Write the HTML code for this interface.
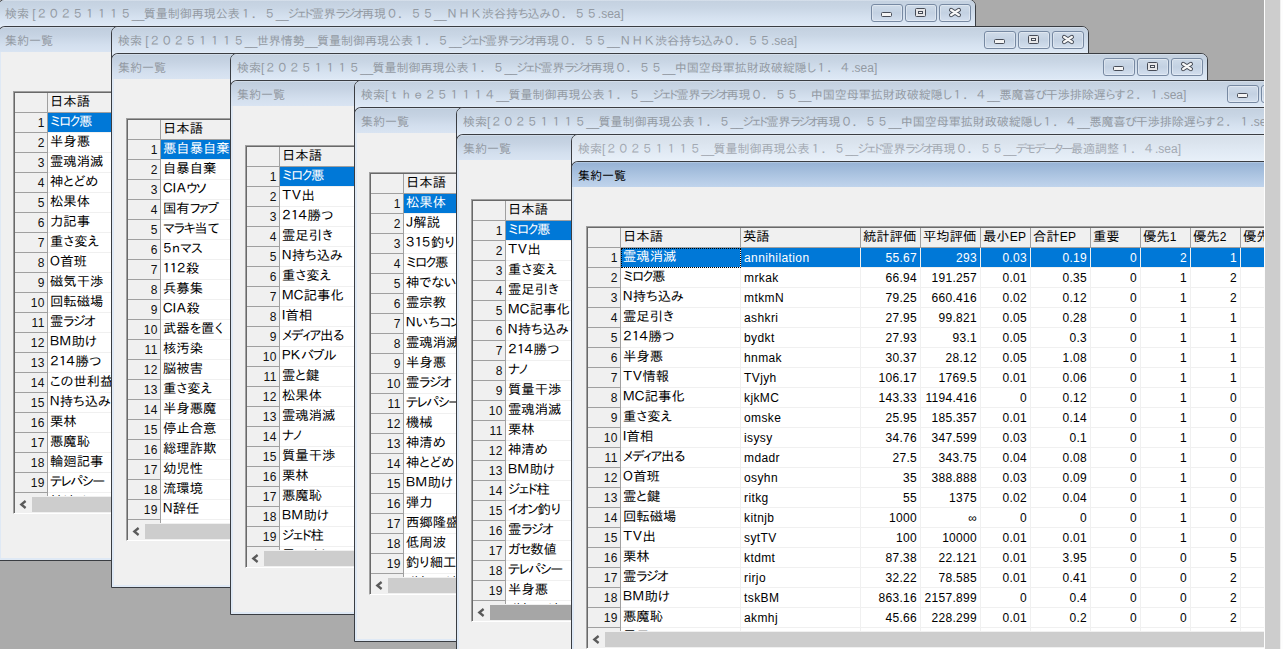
<!DOCTYPE html>
<html lang="ja"><head><meta charset="utf-8"><title>検索</title>
<style>
html,body{margin:0;padding:0}
body{width:1283px;height:649px;overflow:hidden;background:#fdfdfd;position:relative;font-family:"Liberation Sans","IPAPGothic","IPAGothic","Noto Sans CJK JP",sans-serif}
#mdi{position:absolute;left:0;top:0;width:1264px;height:649px;background:#ababab;overflow:hidden}
#vs{position:absolute;left:1264px;top:0;width:19px;height:649px;background:#fdfdfd}
#vs i{position:absolute;left:1px;top:0;width:15px;height:649px;background:#cdcdcd}
#vs b{position:absolute;left:16px;top:0;width:1px;height:649px;background:#f0f0f0}
.win{position:absolute;isolation:isolate;width:976px;height:560px;border:1px solid #3a3d42;border-radius:7px 7px 0 0;background:#dfe9f5;overflow:hidden}
.tb{position:absolute;left:0;top:0;right:0;height:26px;background:linear-gradient(#e3eaf3 0,#c4d1e0 1px,#c9d6e5 8px,#d6e2f0 18px,#dde8f5 25px,#e6eef8 26px)}
.tb.lt{background:linear-gradient(#eef3f8 0,#d7e0ea 1px,#dbe4ee 8px,#e2ebf5 18px,#e7eff8 25px,#eef4fb 26px)}
.tt{position:absolute;left:6px;right:112px;overflow:hidden;top:0;height:26px;line-height:27px;font-size:12px;color:#939aa3;white-space:nowrap;font-family:"Liberation Sans","IPAPGothic","IPAGothic",sans-serif}
.lt .tt{color:#a3a9b2}
.fw{font-family:"IPAGothic","Noto Sans CJK JP",monospace}
.btn{position:absolute;top:4px;width:30px;height:16px;border:1px solid #7789a2;border-radius:3px;background:linear-gradient(#cfdbe9,#c3d1e2 50%,#d3dfee);box-shadow:inset 0 0 0 1px rgba(255,255,255,.35)}
.btn svg{position:absolute;left:-1px;top:-1px}
.in{position:absolute;left:-1px;right:-1px;top:26px;bottom:2px;border:1px solid #3a3d42;border-bottom:none;border-radius:7px 7px 0 0;background:#f0f0f0;overflow:hidden}
.in::before,.in::after{content:"";position:absolute;top:25px;bottom:0;width:2px;background:#dfe9f5}
.in::before{left:0}.in::after{right:0}
.itb{position:absolute;left:0;right:0;top:0;height:25px;background:linear-gradient(#e0e8f2 0,#c0cede 1px,#c6d3e3 8px,#d3dfee 18px,#d9e4f2 25px)}
.itb.act{background:linear-gradient(#c9d9ec 0,#98b4d6 1px,#a3bddc 8px,#b5cbe6 18px,#c0d4ec 25px)}
.itb .tt{color:#939aa3;top:1px}
.itb.act .tt{color:#000}
.grid{position:absolute;left:14px;top:64px;height:421px;border-left:1px solid #a0a0a0;border-top:1px solid #a0a0a0;border-bottom:1px solid #fff;box-sizing:content-box;background:#fff;overflow:hidden}
.grid::before{content:"";position:absolute;left:0;top:0;bottom:0;width:1px;background:#696969;z-index:3}
.grid::after{content:"";position:absolute;left:0;top:0;right:0;height:1px;background:#696969;z-index:3}
.gr{position:relative;height:20px;white-space:nowrap;margin-left:1px;display:flex}
.gr.hd{margin-top:1px}
.c{box-sizing:border-box;height:20px;line-height:17px;font-size:13.33px;border-right:1px solid #f0f0f0;border-bottom:1px solid #f0f0f0;padding:0;overflow:hidden;white-space:nowrap;flex:none;color:#000;background:#fff;text-indent:2px}
.hd .c{background:#f0f0f0;border-color:#a0a0a0;text-indent:2px}
.c.rh{width:33px;background:#f0f0f0;border-color:#a0a0a0;text-align:right;text-indent:0;color:#111}
.c.n{text-align:right;text-indent:0;padding-right:3px}
.c.n,.c.e,.c.rh{font-size:12px;letter-spacing:.3px;line-height:21px}
.c.n,.c.rh{padding-right:3px}
.c.rh{padding-right:2.4px}
.c.e{text-indent:3px;letter-spacing:.4px}
i,u,b,em,s{font-style:normal;font-weight:normal;text-decoration:none}
.c i{letter-spacing:-1.3px}
.c u{letter-spacing:.4px}
.c b{font-size:12px;letter-spacing:.3px}
.tt i{letter-spacing:-1.8px}
.tt em{letter-spacing:-1px}
.tt s{letter-spacing:-.6px}
.c.sel{background:#0078d7;color:#fff}
.c.foc{outline:1px dotted #000;outline-offset:-1px}
.sb{position:absolute;left:1px;right:0;top:404px;height:17px;background:#f0f0f0}
.sb .ar{position:absolute;left:0;top:0;width:17px;height:17px}
.sb .th.hot{background:#a6a6a6}
.sb .th{position:absolute;left:17px;top:1px;height:15px;width:860px;background:#cdcdcd}
</style></head><body>
<div id="mdi">
<div class="win" style="left:-2px;top:-1px">
<div class="tb"><div class="tt">検索 [<span class="fw">２０２５１１１５</span><s>__</s>質量制御再現公表<span class="fw">１．５</span><s>__</s><i>ジェド</i>霊界<i>ラジオ</i>再現<span class="fw">０．５５</span><s>__</s><span class="fw">ＮＨＫ</span>渋谷持<em>ち</em>込<em>み</em><span class="fw">０．５５</span>.sea]</div>
<div class="btn" style="left:872px"><svg width="32" height="18" viewBox="0 0 32 18"><rect x="10.5" y="8.5" width="10" height="4" rx="1" fill="#f4f4f4" stroke="#474c57"/></svg></div>
<div class="btn" style="left:906px"><svg width="32" height="18" viewBox="0 0 32 18"><rect x="10.5" y="4.5" width="10" height="8" rx="1" fill="#e6e6e8" stroke="#474c57"/><rect x="13.5" y="7.5" width="4" height="2" fill="#f4f4f4" stroke="#474c57"/></svg></div>
<div class="btn" style="left:940px"><svg width="32" height="18" viewBox="0 0 32 18"><path d="M12.2 6l7.6 5M19.8 6l-7.6 5" fill="none" stroke="#474c57" stroke-width="4.4" stroke-linecap="round"/><path d="M12.2 6l7.6 5M19.8 6l-7.6 5" fill="none" stroke="#f8f8f8" stroke-width="2.4" stroke-linecap="round"/></svg></div>
</div>
<div class="in"><div class="itb"><div class="tt">集約一覧</div></div>
<div class="grid" style="width:940px">
<div class="gr hd"><div class="c rh"></div><div class="c" style="width:120px">日本語</div></div>
<div class="gr"><div class="c rh">1</div><div class="c d sel" style="width:120px"><i>ミロク</i>悪</div></div>
<div class="gr"><div class="c rh">2</div><div class="c d" style="width:120px">半身悪</div></div>
<div class="gr"><div class="c rh">3</div><div class="c d" style="width:120px">霊魂消滅</div></div>
<div class="gr"><div class="c rh">4</div><div class="c d" style="width:120px">神とどめ</div></div>
<div class="gr"><div class="c rh">5</div><div class="c d" style="width:120px">松果体</div></div>
<div class="gr"><div class="c rh">6</div><div class="c d" style="width:120px">力記事</div></div>
<div class="gr"><div class="c rh">7</div><div class="c d" style="width:120px">重さ変え</div></div>
<div class="gr"><div class="c rh">8</div><div class="c d" style="width:120px"><u>Ｏ</u>首班</div></div>
<div class="gr"><div class="c rh">9</div><div class="c d" style="width:120px">磁気干渉</div></div>
<div class="gr"><div class="c rh">10</div><div class="c d" style="width:120px">回転磁場</div></div>
<div class="gr"><div class="c rh">11</div><div class="c d" style="width:120px">霊<i>ラジオ</i></div></div>
<div class="gr"><div class="c rh">12</div><div class="c d" style="width:120px"><u>ＢＭ</u>助け</div></div>
<div class="gr"><div class="c rh">13</div><div class="c d" style="width:120px"><u>２１４</u>勝つ</div></div>
<div class="gr"><div class="c rh">14</div><div class="c d" style="width:120px">この世利益</div></div>
<div class="gr"><div class="c rh">15</div><div class="c d" style="width:120px"><u>Ｎ</u>持ち込み</div></div>
<div class="gr"><div class="c rh">16</div><div class="c d" style="width:120px">栗林</div></div>
<div class="gr"><div class="c rh">17</div><div class="c d" style="width:120px">悪魔恥</div></div>
<div class="gr"><div class="c rh">18</div><div class="c d" style="width:120px">輪廻記事</div></div>
<div class="gr"><div class="c rh">19</div><div class="c d" style="width:120px"><i>テレパシー</i></div></div>
<div class="gr"><div class="c rh">20</div><div class="c d" style="width:120px">神清め</div></div>
<div class="sb"><div class="ar"><svg width="17" height="17" viewBox="0 0 17 17"><path d="M10.6 5L6.3 8.5l4.3 3.5" fill="none" stroke="#5a5a5a" stroke-width="2.3"/></svg></div><div class="th"></div></div>
</div>
</div></div>
<div class="win" style="left:111px;top:26px">
<div class="tb"><div class="tt">検索 [<span class="fw">２０２５１１１５</span><s>__</s>世界情勢<s>__</s>質量制御再現公表<span class="fw">１．５</span><s>__</s><i>ジェド</i>霊界<i>ラジオ</i>再現<span class="fw">０．５５</span><s>__</s><span class="fw">ＮＨＫ</span>渋谷持<em>ち</em>込<em>み</em><span class="fw">０．５５</span>.sea]</div>
<div class="btn" style="left:872px"><svg width="32" height="18" viewBox="0 0 32 18"><rect x="10.5" y="8.5" width="10" height="4" rx="1" fill="#f4f4f4" stroke="#474c57"/></svg></div>
<div class="btn" style="left:906px"><svg width="32" height="18" viewBox="0 0 32 18"><rect x="10.5" y="4.5" width="10" height="8" rx="1" fill="#e6e6e8" stroke="#474c57"/><rect x="13.5" y="7.5" width="4" height="2" fill="#f4f4f4" stroke="#474c57"/></svg></div>
<div class="btn" style="left:940px"><svg width="32" height="18" viewBox="0 0 32 18"><path d="M12.2 6l7.6 5M19.8 6l-7.6 5" fill="none" stroke="#474c57" stroke-width="4.4" stroke-linecap="round"/><path d="M12.2 6l7.6 5M19.8 6l-7.6 5" fill="none" stroke="#f8f8f8" stroke-width="2.4" stroke-linecap="round"/></svg></div>
</div>
<div class="in"><div class="itb"><div class="tt">集約一覧</div></div>
<div class="grid" style="width:940px">
<div class="gr hd"><div class="c rh"></div><div class="c" style="width:120px">日本語</div></div>
<div class="gr"><div class="c rh">1</div><div class="c d sel" style="width:120px">悪自暴自棄</div></div>
<div class="gr"><div class="c rh">2</div><div class="c d" style="width:120px">自暴自棄</div></div>
<div class="gr"><div class="c rh">3</div><div class="c d" style="width:120px"><u>ＣＩＡ</u><i>ウソ</i></div></div>
<div class="gr"><div class="c rh">4</div><div class="c d" style="width:120px">国有<i>ファブ</i></div></div>
<div class="gr"><div class="c rh">5</div><div class="c d" style="width:120px"><i>マラキ</i>当て</div></div>
<div class="gr"><div class="c rh">6</div><div class="c d" style="width:120px"><u>５ｎ</u><i>マス</i></div></div>
<div class="gr"><div class="c rh">7</div><div class="c d" style="width:120px"><u>１１２</u>殺</div></div>
<div class="gr"><div class="c rh">8</div><div class="c d" style="width:120px">兵募集</div></div>
<div class="gr"><div class="c rh">9</div><div class="c d" style="width:120px"><u>ＣＩＡ</u>殺</div></div>
<div class="gr"><div class="c rh">10</div><div class="c d" style="width:120px">武器を置く</div></div>
<div class="gr"><div class="c rh">11</div><div class="c d" style="width:120px">核汚染</div></div>
<div class="gr"><div class="c rh">12</div><div class="c d" style="width:120px">脳被害</div></div>
<div class="gr"><div class="c rh">13</div><div class="c d" style="width:120px">重さ変え</div></div>
<div class="gr"><div class="c rh">14</div><div class="c d" style="width:120px">半身悪魔</div></div>
<div class="gr"><div class="c rh">15</div><div class="c d" style="width:120px">停止合意</div></div>
<div class="gr"><div class="c rh">16</div><div class="c d" style="width:120px">総理詐欺</div></div>
<div class="gr"><div class="c rh">17</div><div class="c d" style="width:120px">幼児性</div></div>
<div class="gr"><div class="c rh">18</div><div class="c d" style="width:120px">流環境</div></div>
<div class="gr"><div class="c rh">19</div><div class="c d" style="width:120px"><u>Ｎ</u>辞任</div></div>
<div class="gr"><div class="c rh">20</div><div class="c d" style="width:120px"></div></div>
<div class="sb"><div class="ar"><svg width="17" height="17" viewBox="0 0 17 17"><path d="M10.6 5L6.3 8.5l4.3 3.5" fill="none" stroke="#5a5a5a" stroke-width="2.3"/></svg></div><div class="th"></div></div>
</div>
</div></div>
<div class="win" style="left:230px;top:53px">
<div class="tb"><div class="tt">検索[<span class="fw">２０２５１１１５</span><s>__</s>質量制御再現公表<span class="fw">１．５</span><s>__</s><i>ジェド</i>霊界<i>ラジオ</i>再現<span class="fw">０．５５</span><s>__</s>中国空母軍拡財政破綻隠<em>し</em><span class="fw">１．４</span>.sea]</div>
<div class="btn" style="left:872px"><svg width="32" height="18" viewBox="0 0 32 18"><rect x="10.5" y="8.5" width="10" height="4" rx="1" fill="#f4f4f4" stroke="#474c57"/></svg></div>
<div class="btn" style="left:906px"><svg width="32" height="18" viewBox="0 0 32 18"><rect x="10.5" y="4.5" width="10" height="8" rx="1" fill="#e6e6e8" stroke="#474c57"/><rect x="13.5" y="7.5" width="4" height="2" fill="#f4f4f4" stroke="#474c57"/></svg></div>
<div class="btn" style="left:940px"><svg width="32" height="18" viewBox="0 0 32 18"><path d="M12.2 6l7.6 5M19.8 6l-7.6 5" fill="none" stroke="#474c57" stroke-width="4.4" stroke-linecap="round"/><path d="M12.2 6l7.6 5M19.8 6l-7.6 5" fill="none" stroke="#f8f8f8" stroke-width="2.4" stroke-linecap="round"/></svg></div>
</div>
<div class="in"><div class="itb"><div class="tt">集約一覧</div></div>
<div class="grid" style="width:940px">
<div class="gr hd"><div class="c rh"></div><div class="c" style="width:120px">日本語</div></div>
<div class="gr"><div class="c rh">1</div><div class="c d sel" style="width:120px"><i>ミロク</i>悪</div></div>
<div class="gr"><div class="c rh">2</div><div class="c d" style="width:120px"><u>ＴＶ</u>出</div></div>
<div class="gr"><div class="c rh">3</div><div class="c d" style="width:120px"><u>２１４</u>勝つ</div></div>
<div class="gr"><div class="c rh">4</div><div class="c d" style="width:120px">霊足引き</div></div>
<div class="gr"><div class="c rh">5</div><div class="c d" style="width:120px"><u>Ｎ</u>持ち込み</div></div>
<div class="gr"><div class="c rh">6</div><div class="c d" style="width:120px">重さ変え</div></div>
<div class="gr"><div class="c rh">7</div><div class="c d" style="width:120px"><u>ＭＣ</u>記事化</div></div>
<div class="gr"><div class="c rh">8</div><div class="c d" style="width:120px"><u>Ｉ</u>首相</div></div>
<div class="gr"><div class="c rh">9</div><div class="c d" style="width:120px"><i>メディア</i>出る</div></div>
<div class="gr"><div class="c rh">10</div><div class="c d" style="width:120px"><u>ＰＫ</u><i>バブル</i></div></div>
<div class="gr"><div class="c rh">11</div><div class="c d" style="width:120px">霊と鍵</div></div>
<div class="gr"><div class="c rh">12</div><div class="c d" style="width:120px">松果体</div></div>
<div class="gr"><div class="c rh">13</div><div class="c d" style="width:120px">霊魂消滅</div></div>
<div class="gr"><div class="c rh">14</div><div class="c d" style="width:120px"><i>ナノ</i></div></div>
<div class="gr"><div class="c rh">15</div><div class="c d" style="width:120px">質量干渉</div></div>
<div class="gr"><div class="c rh">16</div><div class="c d" style="width:120px">栗林</div></div>
<div class="gr"><div class="c rh">17</div><div class="c d" style="width:120px">悪魔恥</div></div>
<div class="gr"><div class="c rh">18</div><div class="c d" style="width:120px"><u>ＢＭ</u>助け</div></div>
<div class="gr"><div class="c rh">19</div><div class="c d" style="width:120px"><i>ジェド</i>柱</div></div>
<div class="gr"><div class="c rh">20</div><div class="c d" style="width:120px">霊<i>ラジオ</i></div></div>
<div class="sb"><div class="ar"><svg width="17" height="17" viewBox="0 0 17 17"><path d="M10.6 5L6.3 8.5l4.3 3.5" fill="none" stroke="#5a5a5a" stroke-width="2.3"/></svg></div><div class="th"></div></div>
</div>
</div></div>
<div class="win" style="left:354px;top:80px">
<div class="tb"><div class="tt">検索[<span class="fw">ｔｈｅ２５１１１４</span><s>__</s>質量制御再現公表<span class="fw">１．５</span><s>__</s><i>ジェド</i>霊界<i>ラジオ</i>再現<span class="fw">０．５５</span><s>__</s>中国空母軍拡財政破綻隠<em>し</em><span class="fw">１．４</span><s>__</s>悪魔喜<em>び</em>干渉排除遅<em>らす</em><span class="fw">２．１</span>.sea]</div>
<div class="btn" style="left:872px"><svg width="32" height="18" viewBox="0 0 32 18"><rect x="10.5" y="8.5" width="10" height="4" rx="1" fill="#f4f4f4" stroke="#474c57"/></svg></div>
<div class="btn" style="left:906px"><svg width="32" height="18" viewBox="0 0 32 18"><rect x="10.5" y="4.5" width="10" height="8" rx="1" fill="#e6e6e8" stroke="#474c57"/><rect x="13.5" y="7.5" width="4" height="2" fill="#f4f4f4" stroke="#474c57"/></svg></div>
<div class="btn" style="left:940px"><svg width="32" height="18" viewBox="0 0 32 18"><path d="M12.2 6l7.6 5M19.8 6l-7.6 5" fill="none" stroke="#474c57" stroke-width="4.4" stroke-linecap="round"/><path d="M12.2 6l7.6 5M19.8 6l-7.6 5" fill="none" stroke="#f8f8f8" stroke-width="2.4" stroke-linecap="round"/></svg></div>
</div>
<div class="in"><div class="itb"><div class="tt">集約一覧</div></div>
<div class="grid" style="width:940px">
<div class="gr hd"><div class="c rh"></div><div class="c" style="width:120px">日本語</div></div>
<div class="gr"><div class="c rh">1</div><div class="c d sel" style="width:120px">松果体</div></div>
<div class="gr"><div class="c rh">2</div><div class="c d" style="width:120px"><u>Ｊ</u>解説</div></div>
<div class="gr"><div class="c rh">3</div><div class="c d" style="width:120px"><u>３１５</u>釣り</div></div>
<div class="gr"><div class="c rh">4</div><div class="c d" style="width:120px"><i>ミロク</i>悪</div></div>
<div class="gr"><div class="c rh">5</div><div class="c d" style="width:120px">神でない</div></div>
<div class="gr"><div class="c rh">6</div><div class="c d" style="width:120px">霊宗教</div></div>
<div class="gr"><div class="c rh">7</div><div class="c d" style="width:120px"><u>Ｎ</u>いち<i>コン</i></div></div>
<div class="gr"><div class="c rh">8</div><div class="c d" style="width:120px">霊魂消滅</div></div>
<div class="gr"><div class="c rh">9</div><div class="c d" style="width:120px">半身悪</div></div>
<div class="gr"><div class="c rh">10</div><div class="c d" style="width:120px">霊<i>ラジオ</i></div></div>
<div class="gr"><div class="c rh">11</div><div class="c d" style="width:120px"><i>テレパシー</i></div></div>
<div class="gr"><div class="c rh">12</div><div class="c d" style="width:120px">機械</div></div>
<div class="gr"><div class="c rh">13</div><div class="c d" style="width:120px">神清め</div></div>
<div class="gr"><div class="c rh">14</div><div class="c d" style="width:120px">神とどめ</div></div>
<div class="gr"><div class="c rh">15</div><div class="c d" style="width:120px"><u>ＢＭ</u>助け</div></div>
<div class="gr"><div class="c rh">16</div><div class="c d" style="width:120px">弾力</div></div>
<div class="gr"><div class="c rh">17</div><div class="c d" style="width:120px">西郷隆盛</div></div>
<div class="gr"><div class="c rh">18</div><div class="c d" style="width:120px">低周波</div></div>
<div class="gr"><div class="c rh">19</div><div class="c d" style="width:120px">釣り細工</div></div>
<div class="gr"><div class="c rh">20</div><div class="c d" style="width:120px">磁気干渉</div></div>
<div class="sb"><div class="ar"><svg width="17" height="17" viewBox="0 0 17 17"><path d="M10.6 5L6.3 8.5l4.3 3.5" fill="none" stroke="#5a5a5a" stroke-width="2.3"/></svg></div><div class="th"></div></div>
</div>
</div></div>
<div class="win" style="left:456px;top:107px">
<div class="tb"><div class="tt">検索[<span class="fw">２０２５１１１５</span><s>__</s>質量制御再現公表<span class="fw">１．５</span><s>__</s><i>ジェド</i>霊界<i>ラジオ</i>再現<span class="fw">０．５５</span><s>__</s>中国空母軍拡財政破綻隠<em>し</em><span class="fw">１．４</span><s>__</s>悪魔喜<em>び</em>干渉排除遅<em>らす</em><span class="fw">２．１</span>.sea]</div>
<div class="btn" style="left:872px"><svg width="32" height="18" viewBox="0 0 32 18"><rect x="10.5" y="8.5" width="10" height="4" rx="1" fill="#f4f4f4" stroke="#474c57"/></svg></div>
<div class="btn" style="left:906px"><svg width="32" height="18" viewBox="0 0 32 18"><rect x="10.5" y="4.5" width="10" height="8" rx="1" fill="#e6e6e8" stroke="#474c57"/><rect x="13.5" y="7.5" width="4" height="2" fill="#f4f4f4" stroke="#474c57"/></svg></div>
<div class="btn" style="left:940px"><svg width="32" height="18" viewBox="0 0 32 18"><path d="M12.2 6l7.6 5M19.8 6l-7.6 5" fill="none" stroke="#474c57" stroke-width="4.4" stroke-linecap="round"/><path d="M12.2 6l7.6 5M19.8 6l-7.6 5" fill="none" stroke="#f8f8f8" stroke-width="2.4" stroke-linecap="round"/></svg></div>
</div>
<div class="in"><div class="itb"><div class="tt">集約一覧</div></div>
<div class="grid" style="width:940px">
<div class="gr hd"><div class="c rh"></div><div class="c" style="width:120px">日本語</div></div>
<div class="gr"><div class="c rh">1</div><div class="c d sel" style="width:120px"><i>ミロク</i>悪</div></div>
<div class="gr"><div class="c rh">2</div><div class="c d" style="width:120px"><u>ＴＶ</u>出</div></div>
<div class="gr"><div class="c rh">3</div><div class="c d" style="width:120px">重さ変え</div></div>
<div class="gr"><div class="c rh">4</div><div class="c d" style="width:120px">霊足引き</div></div>
<div class="gr"><div class="c rh">5</div><div class="c d" style="width:120px"><u>ＭＣ</u>記事化</div></div>
<div class="gr"><div class="c rh">6</div><div class="c d" style="width:120px"><u>Ｎ</u>持ち込み</div></div>
<div class="gr"><div class="c rh">7</div><div class="c d" style="width:120px"><u>２１４</u>勝つ</div></div>
<div class="gr"><div class="c rh">8</div><div class="c d" style="width:120px"><i>ナノ</i></div></div>
<div class="gr"><div class="c rh">9</div><div class="c d" style="width:120px">質量干渉</div></div>
<div class="gr"><div class="c rh">10</div><div class="c d" style="width:120px">霊魂消滅</div></div>
<div class="gr"><div class="c rh">11</div><div class="c d" style="width:120px">栗林</div></div>
<div class="gr"><div class="c rh">12</div><div class="c d" style="width:120px">神清め</div></div>
<div class="gr"><div class="c rh">13</div><div class="c d" style="width:120px"><u>ＢＭ</u>助け</div></div>
<div class="gr"><div class="c rh">14</div><div class="c d" style="width:120px"><i>ジェド</i>柱</div></div>
<div class="gr"><div class="c rh">15</div><div class="c d" style="width:120px"><i>イオン</i>釣り</div></div>
<div class="gr"><div class="c rh">16</div><div class="c d" style="width:120px">霊<i>ラジオ</i></div></div>
<div class="gr"><div class="c rh">17</div><div class="c d" style="width:120px"><i>ガセ</i>数値</div></div>
<div class="gr"><div class="c rh">18</div><div class="c d" style="width:120px"><i>テレパシー</i></div></div>
<div class="gr"><div class="c rh">19</div><div class="c d" style="width:120px">半身悪</div></div>
<div class="gr"><div class="c rh">20</div><div class="c d" style="width:120px">磁気干渉</div></div>
<div class="sb"><div class="ar"><svg width="17" height="17" viewBox="0 0 17 17"><path d="M10.6 5L6.3 8.5l4.3 3.5" fill="none" stroke="#5a5a5a" stroke-width="2.3"/></svg></div><div class="th hot"></div></div>
</div>
</div></div>
<div class="win" style="left:571px;top:134px">
<div class="tb lt"><div class="tt">検索[<span class="fw">２０２５１１１５</span><s>__</s>質量制御再現公表<span class="fw">１．５</span><s>__</s><i>ジェド</i>霊界<i>ラジオ</i>再現<span class="fw">０．５５</span><s>__</s><i>デモデーター</i>最適調整<span class="fw">１．４</span>.sea]</div>
<div class="btn" style="left:872px"><svg width="32" height="18" viewBox="0 0 32 18"><rect x="10.5" y="8.5" width="10" height="4" rx="1" fill="#f4f4f4" stroke="#474c57"/></svg></div>
<div class="btn" style="left:906px"><svg width="32" height="18" viewBox="0 0 32 18"><rect x="10.5" y="4.5" width="10" height="8" rx="1" fill="#e6e6e8" stroke="#474c57"/><rect x="13.5" y="7.5" width="4" height="2" fill="#f4f4f4" stroke="#474c57"/></svg></div>
<div class="btn" style="left:940px"><svg width="32" height="18" viewBox="0 0 32 18"><path d="M12.2 6l7.6 5M19.8 6l-7.6 5" fill="none" stroke="#474c57" stroke-width="4.4" stroke-linecap="round"/><path d="M12.2 6l7.6 5M19.8 6l-7.6 5" fill="none" stroke="#f8f8f8" stroke-width="2.4" stroke-linecap="round"/></svg></div>
</div>
<div class="in"><div class="itb act"><div class="tt">集約一覧</div></div>
<div class="grid" style="width:940px">
<div class="gr hd"><div class="c rh"></div><div class="c" style="width:120px">日本語</div><div class="c" style="width:120px">英語</div><div class="c" style="width:60px">統計評価</div><div class="c" style="width:60px">平均評価</div><div class="c" style="width:50px">最小<b>EP</b></div><div class="c" style="width:60px">合計<b>EP</b></div><div class="c" style="width:50px">重要</div><div class="c" style="width:50px">優先<b>1</b></div><div class="c" style="width:50px">優先<b>2</b></div><div class="c" style="width:50px">優先<b>3</b></div><div class="c" style="width:50px">優先<b>4</b></div><div class="c" style="width:50px">優先<b>5</b></div></div>
<div class="gr"><div class="c rh">1</div><div class="c d sel foc" style="width:120px">霊魂消滅</div><div class="c d e sel" style="width:120px">annihilation</div><div class="c d n sel" style="width:60px">55.67</div><div class="c d n sel" style="width:60px">293</div><div class="c d n sel" style="width:50px">0.03</div><div class="c d n sel" style="width:60px">0.19</div><div class="c d n sel" style="width:50px">0</div><div class="c d n sel" style="width:50px">2</div><div class="c d n sel" style="width:50px">1</div><div class="c d n sel" style="width:50px"></div><div class="c d n sel" style="width:50px"></div><div class="c d n sel" style="width:50px"></div></div>
<div class="gr"><div class="c rh">2</div><div class="c d" style="width:120px"><i>ミロク</i>悪</div><div class="c d e" style="width:120px">mrkak</div><div class="c d n" style="width:60px">66.94</div><div class="c d n" style="width:60px">191.257</div><div class="c d n" style="width:50px">0.01</div><div class="c d n" style="width:60px">0.35</div><div class="c d n" style="width:50px">0</div><div class="c d n" style="width:50px">1</div><div class="c d n" style="width:50px">2</div><div class="c d n" style="width:50px"></div><div class="c d n" style="width:50px"></div><div class="c d n" style="width:50px"></div></div>
<div class="gr"><div class="c rh">3</div><div class="c d" style="width:120px"><u>Ｎ</u>持ち込み</div><div class="c d e" style="width:120px">mtkmN</div><div class="c d n" style="width:60px">79.25</div><div class="c d n" style="width:60px">660.416</div><div class="c d n" style="width:50px">0.02</div><div class="c d n" style="width:60px">0.12</div><div class="c d n" style="width:50px">0</div><div class="c d n" style="width:50px">1</div><div class="c d n" style="width:50px">2</div><div class="c d n" style="width:50px"></div><div class="c d n" style="width:50px"></div><div class="c d n" style="width:50px"></div></div>
<div class="gr"><div class="c rh">4</div><div class="c d" style="width:120px">霊足引き</div><div class="c d e" style="width:120px">ashkri</div><div class="c d n" style="width:60px">27.95</div><div class="c d n" style="width:60px">99.821</div><div class="c d n" style="width:50px">0.05</div><div class="c d n" style="width:60px">0.28</div><div class="c d n" style="width:50px">0</div><div class="c d n" style="width:50px">1</div><div class="c d n" style="width:50px">1</div><div class="c d n" style="width:50px"></div><div class="c d n" style="width:50px"></div><div class="c d n" style="width:50px"></div></div>
<div class="gr"><div class="c rh">5</div><div class="c d" style="width:120px"><u>２１４</u>勝つ</div><div class="c d e" style="width:120px">bydkt</div><div class="c d n" style="width:60px">27.93</div><div class="c d n" style="width:60px">93.1</div><div class="c d n" style="width:50px">0.05</div><div class="c d n" style="width:60px">0.3</div><div class="c d n" style="width:50px">0</div><div class="c d n" style="width:50px">1</div><div class="c d n" style="width:50px">1</div><div class="c d n" style="width:50px"></div><div class="c d n" style="width:50px"></div><div class="c d n" style="width:50px"></div></div>
<div class="gr"><div class="c rh">6</div><div class="c d" style="width:120px">半身悪</div><div class="c d e" style="width:120px">hnmak</div><div class="c d n" style="width:60px">30.37</div><div class="c d n" style="width:60px">28.12</div><div class="c d n" style="width:50px">0.05</div><div class="c d n" style="width:60px">1.08</div><div class="c d n" style="width:50px">0</div><div class="c d n" style="width:50px">1</div><div class="c d n" style="width:50px">1</div><div class="c d n" style="width:50px"></div><div class="c d n" style="width:50px"></div><div class="c d n" style="width:50px"></div></div>
<div class="gr"><div class="c rh">7</div><div class="c d" style="width:120px"><u>ＴＶ</u>情報</div><div class="c d e" style="width:120px">TVjyh</div><div class="c d n" style="width:60px">106.17</div><div class="c d n" style="width:60px">1769.5</div><div class="c d n" style="width:50px">0.01</div><div class="c d n" style="width:60px">0.06</div><div class="c d n" style="width:50px">0</div><div class="c d n" style="width:50px">1</div><div class="c d n" style="width:50px">1</div><div class="c d n" style="width:50px"></div><div class="c d n" style="width:50px"></div><div class="c d n" style="width:50px"></div></div>
<div class="gr"><div class="c rh">8</div><div class="c d" style="width:120px"><u>ＭＣ</u>記事化</div><div class="c d e" style="width:120px">kjkMC</div><div class="c d n" style="width:60px">143.33</div><div class="c d n" style="width:60px">1194.416</div><div class="c d n" style="width:50px">0</div><div class="c d n" style="width:60px">0.12</div><div class="c d n" style="width:50px">0</div><div class="c d n" style="width:50px">1</div><div class="c d n" style="width:50px">0</div><div class="c d n" style="width:50px"></div><div class="c d n" style="width:50px"></div><div class="c d n" style="width:50px"></div></div>
<div class="gr"><div class="c rh">9</div><div class="c d" style="width:120px">重さ変え</div><div class="c d e" style="width:120px">omske</div><div class="c d n" style="width:60px">25.95</div><div class="c d n" style="width:60px">185.357</div><div class="c d n" style="width:50px">0.01</div><div class="c d n" style="width:60px">0.14</div><div class="c d n" style="width:50px">0</div><div class="c d n" style="width:50px">1</div><div class="c d n" style="width:50px">0</div><div class="c d n" style="width:50px"></div><div class="c d n" style="width:50px"></div><div class="c d n" style="width:50px"></div></div>
<div class="gr"><div class="c rh">10</div><div class="c d" style="width:120px"><u>Ｉ</u>首相</div><div class="c d e" style="width:120px">isysy</div><div class="c d n" style="width:60px">34.76</div><div class="c d n" style="width:60px">347.599</div><div class="c d n" style="width:50px">0.03</div><div class="c d n" style="width:60px">0.1</div><div class="c d n" style="width:50px">0</div><div class="c d n" style="width:50px">1</div><div class="c d n" style="width:50px">0</div><div class="c d n" style="width:50px"></div><div class="c d n" style="width:50px"></div><div class="c d n" style="width:50px"></div></div>
<div class="gr"><div class="c rh">11</div><div class="c d" style="width:120px"><i>メディア</i>出る</div><div class="c d e" style="width:120px">mdadr</div><div class="c d n" style="width:60px">27.5</div><div class="c d n" style="width:60px">343.75</div><div class="c d n" style="width:50px">0.04</div><div class="c d n" style="width:60px">0.08</div><div class="c d n" style="width:50px">0</div><div class="c d n" style="width:50px">1</div><div class="c d n" style="width:50px">0</div><div class="c d n" style="width:50px"></div><div class="c d n" style="width:50px"></div><div class="c d n" style="width:50px"></div></div>
<div class="gr"><div class="c rh">12</div><div class="c d" style="width:120px"><u>Ｏ</u>首班</div><div class="c d e" style="width:120px">osyhn</div><div class="c d n" style="width:60px">35</div><div class="c d n" style="width:60px">388.888</div><div class="c d n" style="width:50px">0.03</div><div class="c d n" style="width:60px">0.09</div><div class="c d n" style="width:50px">0</div><div class="c d n" style="width:50px">1</div><div class="c d n" style="width:50px">0</div><div class="c d n" style="width:50px"></div><div class="c d n" style="width:50px"></div><div class="c d n" style="width:50px"></div></div>
<div class="gr"><div class="c rh">13</div><div class="c d" style="width:120px">霊と鍵</div><div class="c d e" style="width:120px">ritkg</div><div class="c d n" style="width:60px">55</div><div class="c d n" style="width:60px">1375</div><div class="c d n" style="width:50px">0.02</div><div class="c d n" style="width:60px">0.04</div><div class="c d n" style="width:50px">0</div><div class="c d n" style="width:50px">1</div><div class="c d n" style="width:50px">0</div><div class="c d n" style="width:50px"></div><div class="c d n" style="width:50px"></div><div class="c d n" style="width:50px"></div></div>
<div class="gr"><div class="c rh">14</div><div class="c d" style="width:120px">回転磁場</div><div class="c d e" style="width:120px">kitnjb</div><div class="c d n" style="width:60px">1000</div><div class="c d n" style="width:60px">∞</div><div class="c d n" style="width:50px">0</div><div class="c d n" style="width:60px">0</div><div class="c d n" style="width:50px">0</div><div class="c d n" style="width:50px">1</div><div class="c d n" style="width:50px">0</div><div class="c d n" style="width:50px"></div><div class="c d n" style="width:50px"></div><div class="c d n" style="width:50px"></div></div>
<div class="gr"><div class="c rh">15</div><div class="c d" style="width:120px"><u>ＴＶ</u>出</div><div class="c d e" style="width:120px">sytTV</div><div class="c d n" style="width:60px">100</div><div class="c d n" style="width:60px">10000</div><div class="c d n" style="width:50px">0.01</div><div class="c d n" style="width:60px">0.01</div><div class="c d n" style="width:50px">0</div><div class="c d n" style="width:50px">1</div><div class="c d n" style="width:50px">0</div><div class="c d n" style="width:50px"></div><div class="c d n" style="width:50px"></div><div class="c d n" style="width:50px"></div></div>
<div class="gr"><div class="c rh">16</div><div class="c d" style="width:120px">栗林</div><div class="c d e" style="width:120px">ktdmt</div><div class="c d n" style="width:60px">87.38</div><div class="c d n" style="width:60px">22.121</div><div class="c d n" style="width:50px">0.01</div><div class="c d n" style="width:60px">3.95</div><div class="c d n" style="width:50px">0</div><div class="c d n" style="width:50px">0</div><div class="c d n" style="width:50px">5</div><div class="c d n" style="width:50px"></div><div class="c d n" style="width:50px"></div><div class="c d n" style="width:50px"></div></div>
<div class="gr"><div class="c rh">17</div><div class="c d" style="width:120px">霊<i>ラジオ</i></div><div class="c d e" style="width:120px">rirjo</div><div class="c d n" style="width:60px">32.22</div><div class="c d n" style="width:60px">78.585</div><div class="c d n" style="width:50px">0.01</div><div class="c d n" style="width:60px">0.41</div><div class="c d n" style="width:50px">0</div><div class="c d n" style="width:50px">0</div><div class="c d n" style="width:50px">2</div><div class="c d n" style="width:50px"></div><div class="c d n" style="width:50px"></div><div class="c d n" style="width:50px"></div></div>
<div class="gr"><div class="c rh">18</div><div class="c d" style="width:120px"><u>ＢＭ</u>助け</div><div class="c d e" style="width:120px">tskBM</div><div class="c d n" style="width:60px">863.16</div><div class="c d n" style="width:60px">2157.899</div><div class="c d n" style="width:50px">0</div><div class="c d n" style="width:60px">0.4</div><div class="c d n" style="width:50px">0</div><div class="c d n" style="width:50px">0</div><div class="c d n" style="width:50px">2</div><div class="c d n" style="width:50px"></div><div class="c d n" style="width:50px"></div><div class="c d n" style="width:50px"></div></div>
<div class="gr"><div class="c rh">19</div><div class="c d" style="width:120px">悪魔恥</div><div class="c d e" style="width:120px">akmhj</div><div class="c d n" style="width:60px">45.66</div><div class="c d n" style="width:60px">228.299</div><div class="c d n" style="width:50px">0.01</div><div class="c d n" style="width:60px">0.2</div><div class="c d n" style="width:50px">0</div><div class="c d n" style="width:50px">0</div><div class="c d n" style="width:50px">2</div><div class="c d n" style="width:50px"></div><div class="c d n" style="width:50px"></div><div class="c d n" style="width:50px"></div></div>
<div class="gr"><div class="c rh">20</div><div class="c d" style="width:120px">霊界</div><div class="c d e" style="width:120px">rikai</div><div class="c d n" style="width:60px">40.5</div><div class="c d n" style="width:60px">120.5</div><div class="c d n" style="width:50px">0.01</div><div class="c d n" style="width:60px">0.2</div><div class="c d n" style="width:50px">0</div><div class="c d n" style="width:50px">0</div><div class="c d n" style="width:50px">2</div><div class="c d n" style="width:50px"></div><div class="c d n" style="width:50px"></div><div class="c d n" style="width:50px"></div></div>
<div class="sb"><div class="ar"><svg width="17" height="17" viewBox="0 0 17 17"><path d="M10.6 5L6.3 8.5l4.3 3.5" fill="none" stroke="#5a5a5a" stroke-width="2.3"/></svg></div><div class="th"></div></div>
</div>
</div></div>
</div><div id="vs"><i></i><b></b></div></body></html>
